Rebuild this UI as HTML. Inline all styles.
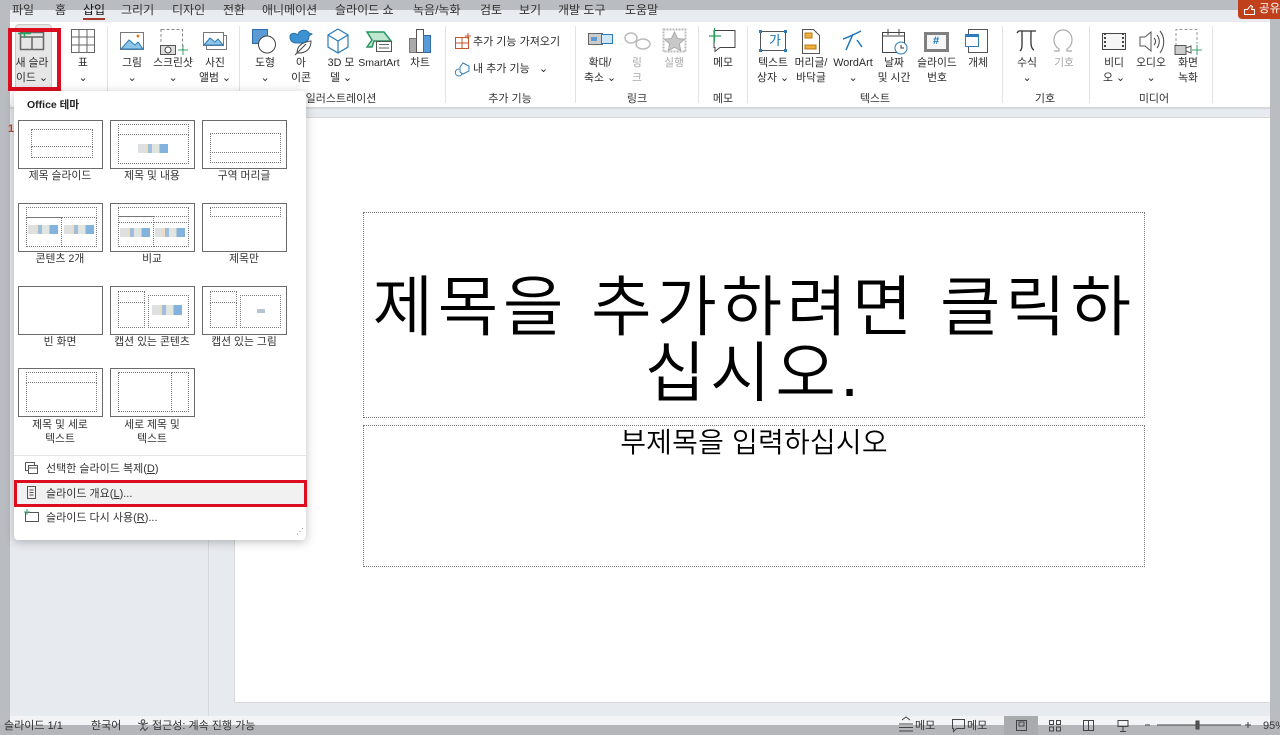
<!DOCTYPE html>
<html lang="ko"><head><meta charset="utf-8"><style>
html,body{margin:0;padding:0}
body{width:1280px;height:735px;position:relative;overflow:hidden;background:#e7eaef;font-family:"Liberation Sans","Noto Sans CJK KR",sans-serif;color:#2b2b2b;font-size:11px}
div,span,svg{position:absolute}
.b{white-space:nowrap;line-height:14px}
.c{text-align:center;white-space:nowrap;line-height:14.5px;font-size:10.8px}
.tab{top:2px;font-size:12px;line-height:16px;white-space:nowrap;color:#333}
.sep{top:26px;height:77px;width:1px;background:#e2e2e2}
.g{top:92px;font-size:11px;line-height:14px;text-align:center;white-space:nowrap;color:#333}
.th{width:83px;height:47px;border:1px solid #6a6a6a;background:#fff;box-sizing:content-box}
.d{border:1px dotted #777;box-sizing:border-box}
.l{font-size:10.8px;line-height:14px;text-align:center;white-space:nowrap;width:92px;color:#333}
.mi{font-size:11px;left:46px;white-space:nowrap;line-height:14px;color:#333}
.dis{color:#a8a8a8}
.ic{width:30px;height:9px;background:linear-gradient(90deg,#d4d6d9 0 25%,#e7d2a8 25% 33%,#7fa8d4 33% 47%,#d5dcd6 47% 72%,#5a9ad0 72%);opacity:.75}
.s{font-size:11px;top:718px;line-height:14px;white-space:nowrap;color:#333}
</style></head><body>
<!-- window chrome -->
<div style="left:0;top:0;width:1280px;height:10px;background:#b9bcc0"></div>
<div style="left:0;top:0;width:10px;height:735px;background:#b9bcc0"></div>
<div style="left:1270px;top:0;width:10px;height:735px;background:#b9bcc0"></div>
<div style="left:0;top:725px;width:1280px;height:10px;background:#b4b6b9"></div>
<div style="left:10px;top:10px;width:1260px;height:12px;background:#e8ebef"></div>
<div style="left:10px;top:22px;width:1260px;height:85px;background:#fff;border-radius:0 0 0 4px"></div>
<div style="left:10px;top:107px;width:1260px;height:2px;background:#d5d8dc"></div>
<div style="left:234px;top:117px;width:1036px;height:586px;background:#fff;border-left:1px solid #d8d8d8;border-top:1px solid #d8d8d8;border-bottom:1px solid #d8d8d8;box-sizing:border-box"></div>
<div style="left:208px;top:109px;width:1px;height:607px;background:#d5d8dc"></div>
<div style="left:10px;top:716px;width:1260px;height:9px;background:#f3f4f6"></div>
<div style="left:1238px;top:0;width:42px;height:19px;background:#c0401c;border-radius:0 0 0 4px"></div>
<svg style="left:1243px;top:3px" width="14" height="13" fill="none" stroke="#fff"><path d="M1.500 6.500h3l3-4 2 1-1 3h3v5h-10z"/></svg>
<span class="b" style="left:1259px;top:2px;color:#fff;font-size:11.500px">공유</span>

<!-- tabs -->
<span class="tab" style="left:12px">파일</span><span class="tab" style="left:55px">홈</span>
<span class="tab" style="left:83px;color:#111">삽입</span>
<div style="left:83px;top:18px;width:22px;height:2px;background:#a8392a"></div>
<span class="tab" style="left:121px">그리기</span><span class="tab" style="left:172px">디자인</span>
<span class="tab" style="left:223px">전환</span><span class="tab" style="left:262px">애니메이션</span>
<span class="tab" style="left:335px">슬라이드 쇼</span><span class="tab" style="left:413px">녹음/녹화</span>
<span class="tab" style="left:480px">검토</span><span class="tab" style="left:519px">보기</span>
<span class="tab" style="left:558px">개발 도구</span><span class="tab" style="left:625px">도움말</span>

<!-- new-slide button + red box -->
<div style="left:15px;top:24px;width:35px;height:66px;background:#e6e6e6;border:1px solid #c8c8c8;border-radius:4px"></div>
<svg style="left:0;top:0" width="1280" height="110" fill="none" stroke-width="1">
<g stroke="#666"><path d="M20.500 32.500h23v17h-23zM20.500 37h23M32 37v12.500" stroke-width="1.500"/></g><path d="M18 33.500h13M24.500 29v9" stroke="#2f9e5f" stroke-width="1.500"/>
<path d="M71.500 29.500h23v23h-23zM71.500 37h23M71.500 45h23M79 29.500v23M87 29.500v23" stroke="#666"/>
<path d="M120.500 32.500h23v17h-23z" stroke="#777" fill="#fff"/><path d="M121 49l8-9 6 5 3-3 5 7z" fill="#8dc4e8" stroke="#2b7cb8"/><circle cx="138" cy="36" r="1.500" fill="#d9822b"/>
<path d="M161.500 29.500h21v21" stroke="#888" stroke-dasharray="3 2"/><path d="M161 29v14" stroke="#888" stroke-dasharray="3 2"/><path d="M160.500 45.500h15v9h-15z" stroke="#555" fill="#ddd"/><circle cx="168" cy="50" r="3" stroke="#444" fill="#fff"/><path d="M178 50h10M183 45v10" stroke="#3aa36b"/>
<path d="M203.500 32.500h20v13h-20z" stroke="#777" fill="#fff"/><path d="M204 45l6-7 5 4 3-3 5 6z" fill="#8dc4e8" stroke="#2b7cb8"/><path d="M223.500 35.500h3v14h-20v-4" stroke="#777"/>
<rect x="252.500" y="29.500" width="15" height="14" fill="#5b9bd5" stroke="#2d6ea8"/><circle cx="267" cy="44.500" r="8.500" fill="#fff" stroke="#444"/>
<path d="M290 37c0-5 6-4 8-2 1-6 9-6 11-2l3 1-3 2c0 5-3 6-5 7h-8c-4 0-6-3-6-6z" fill="#3d93d1" stroke="#2a73ac"/><path d="M297 53c0-8 6-11 14-12 0 8-5 12-12 12z" fill="#fff" stroke="#444"/><path d="M295 55l11-11" stroke="#444"/>
<path d="M338 29l10 6v12l-10 6-10-6V35zM328 35l10 6 10-6M338 41v12" stroke="#2b7cb8" stroke-width="1.200"/>
<path d="M367 32h17l7 9H374l-2 6h-5l5-7z" fill="#bfe6cf" stroke="#2a9460" stroke-width="1.500"/><rect x="376.500" y="41.500" width="15" height="10" fill="#fff" stroke="#555"/><path d="M379 44.500h10M379 48h10" stroke="#666"/>
<rect x="409.500" y="38.500" width="7" height="14" fill="#aaa" stroke="#777"/><rect x="416.500" y="29.500" width="7" height="23" fill="#fff" stroke="#555"/><rect x="423.500" y="35.500" width="7" height="17" fill="#5b9bd5" stroke="#2d6ea8"/>
<path d="M455.500 37.500h13v11h-13zM455.500 43h13M462 37.500v11" stroke="#c4532a"/><path d="M465 36h6M468 33v6" stroke="#c4532a"/>
<path d="M463 63l6 3v5l-6 3-3-2v-5zM459 69a3.500 3.500 0 1 0 3 5" stroke="#2b7cb8"/>
<path d="M588.500 33.500h14v11h-14z" fill="#ccc" stroke="#666"/><path d="M602 37l2-2v8l-2-1" stroke="#666"/><rect x="601.500" y="34.500" width="11" height="9" fill="#cfe6f5" stroke="#2b7cb8"/><rect x="591" y="37" width="6" height="4" fill="#5b9bd5"/>
<g stroke="#bcbcbc" stroke-width="1.500"><ellipse cx="631" cy="38" rx="6" ry="5"/><ellipse cx="643" cy="44" rx="7" ry="5"/></g>
<rect x="663.500" y="29.500" width="22" height="22" stroke="#bbb" stroke-dasharray="2 1" stroke-width="2"/><path d="M674.500 32l3 6.500 7 .7-5.200 4.600 1.500 7-6.300-3.600-6.300 3.600 1.500-7-5.200-4.600 7-.7z" fill="#c8c8c8" stroke="#aaa"/>
<path d="M714 30.500h21v17h-15l-5 4v-4h-1z" stroke="#444"/><path d="M709 36h12M714.500 28v14" stroke="#2d9d5b" stroke-width="1.300"/>
<rect x="760.500" y="31.500" width="25" height="19" stroke="#555"/><g fill="#2b7cb8"><rect x="759" y="30" width="3" height="3"/><rect x="784" y="30" width="3" height="3"/><rect x="759" y="49" width="3" height="3"/><rect x="784" y="49" width="3" height="3"/></g>
<path d="M802.500 29.500h11l6 6v18h-17z" stroke="#555" fill="#fff"/><rect x="805" y="33" width="7" height="5" fill="#f0b040" stroke="#b97a10"/><rect x="805" y="45" width="11" height="4" fill="#f0b040" stroke="#b97a10"/>
<path d="M843 39c6-2 10-4 18-8M853 34l-7 16M857 40l5 7" stroke="#1a74b8" stroke-width="1.500"/>
<rect x="882.500" y="32.500" width="22" height="20" stroke="#444" fill="#fff"/><path d="M882 36h23M888 29v6M899 29v6" stroke="#444"/><circle cx="901" cy="48" r="6" fill="#fff" stroke="#2b7cb8"/><path d="M901 45v3h3" stroke="#333"/>
<rect x="925.500" y="33.500" width="22" height="17" fill="#f4f6f8" stroke="#808080" stroke-width="3"/>
<rect x="968.500" y="29.500" width="19" height="23" stroke="#555" fill="#fff"/><rect x="965.500" y="34.500" width="13" height="12" fill="#fff" stroke="#2b7cb8"/><path d="M965 36h13" stroke="#2b7cb8" stroke-width="2"/>
<path d="M1017 33c2-3 3-2 5-2h14M1022 31v15c0 3-1 4-2 5M1031 31c0 10-1 17 3 19" stroke="#333" stroke-width="1.300"/>
<path d="M1054 51h5v-2c-3-2-5-5-5-9 0-6 4-10 9-10s9 4 9 10c0 4-2 7-5 9v2h5" stroke="#aaa" stroke-width="1.200"/>
<rect x="1102.500" y="33.500" width="23" height="16" fill="#f5f5f5" stroke="#444"/><path d="M1105 33v17M1123 33v17" stroke="#444" stroke-dasharray="2 2" stroke-width="2"/>
<path d="M1140 37h5l6-5v19l-6-5h-5z" stroke="#555"/><path d="M1154 38c2 2 2 5 0 7M1157 35c3 4 3 9 0 13M1160 31c5 6 5 15 0 22" stroke="#444"/>
<path d="M1176 46V29.500h21V44" stroke="#999" stroke-dasharray="3 2"/><rect x="1175" y="45.500" width="11" height="9" fill="#ccc" stroke="#555"/><path d="M1186 48l5-2v7l-5-2" stroke="#555"/><path d="M1192 50h10M1197 45v10" stroke="#3aa36b"/>
</svg>
<span class="b" style="left:769px;top:34px;font-size:13px;color:#1a74b8">가</span>
<span class="b" style="left:933px;top:34px;font-size:11px;font-weight:bold;color:#1a74b8">#</span>
<div style="left:8px;top:28px;width:45px;height:55px;border:4px solid #dc0d1f;box-sizing:content-box"></div>

<!-- ribbon labels -->
<div class="c" style="left:11px;top:56px;width:42px">새 슬라<br>이드 ⌄</div>
<div class="c" style="left:64px;top:56px;width:38px">표<br>⌄</div>
<div class="c" style="left:112px;top:56px;width:40px">그림<br>⌄</div>
<div class="c" style="left:150px;top:56px;width:46px">스크린샷<br>⌄</div>
<div class="c" style="left:195px;top:56px;width:40px">사진<br>앨범 ⌄</div>
<div class="c" style="left:245px;top:56px;width:40px">도형<br>⌄</div>
<div class="c" style="left:282px;top:56px;width:38px">아<br>이콘</div>
<div class="c" style="left:320px;top:56px;width:42px">3D 모<br>델 ⌄</div>
<div class="c" style="left:357px;top:56px;width:44px;font-size:10.500px">SmartArt</div>
<div class="c" style="left:401px;top:56px;width:38px">차트</div>
<span class="b" style="left:473px;top:35px;font-size:11px">추가 기능 가져오기</span>
<span class="b" style="left:473px;top:62px;font-size:11px">내 추가 기능 &nbsp; ⌄</span>
<div class="c" style="left:580px;top:56px;width:40px">확대/<br>축소 ⌄</div>
<div class="c dis" style="left:617px;top:56px;width:40px">링<br>크</div>
<div class="c dis" style="left:655px;top:56px;width:38px">실행</div>
<div class="c" style="left:704px;top:56px;width:38px">메모</div>
<div class="c" style="left:752px;top:56px;width:42px">텍스트<br>상자 ⌄</div>
<div class="c" style="left:788px;top:56px;width:46px">머리글/<br>바닥글</div>
<div class="c" style="left:830px;top:56px;width:46px;">WordArt<br>⌄</div>
<div class="c" style="left:873px;top:56px;width:42px">날짜<br>및 시간</div>
<div class="c" style="left:913px;top:56px;width:48px">슬라이드<br>번호</div>
<div class="c" style="left:958px;top:56px;width:40px">개체</div>
<div class="c" style="left:1008px;top:56px;width:38px">수식<br>⌄</div>
<div class="c dis" style="left:1045px;top:56px;width:38px">기호</div>
<div class="c" style="left:1094px;top:56px;width:40px">비디<br>오 ⌄</div>
<div class="c" style="left:1130px;top:56px;width:42px">오디오<br>⌄</div>
<div class="c" style="left:1168px;top:56px;width:40px">화면<br>녹화</div>
<div class="g" style="left:305px;width:72px">일러스트레이션</div>
<div class="g" style="left:485px;width:50px">추가 기능</div>
<div class="g" style="left:620px;width:34px">링크</div>
<div class="g" style="left:706px;width:34px">메모</div>
<div class="g" style="left:858px;width:34px">텍스트</div>
<div class="g" style="left:1028px;width:34px">기호</div>
<div class="g" style="left:1136px;width:36px">미디어</div>
<div class="sep" style="left:107px"></div><div class="sep" style="left:239px"></div><div class="sep" style="left:445px"></div><div class="sep" style="left:575px"></div><div class="sep" style="left:698px"></div><div class="sep" style="left:747px"></div><div class="sep" style="left:1002px"></div><div class="sep" style="left:1089px"></div><div class="sep" style="left:1212px"></div>

<span class="b" style="left:8px;top:122px;color:#b7472a;font-size:11px;font-weight:bold">1</span>

<!-- slide -->
<div style="left:363px;top:212px;width:782px;height:206px;border:1px dotted #777;box-sizing:border-box"></div>
<div style="left:363px;top:425px;width:782px;height:142px;border:1px dotted #777;box-sizing:border-box"></div>
<div style="left:363px;top:274px;width:782px;text-align:center;font-size:66px;letter-spacing:4.500px;line-height:66px;color:#000;white-space:nowrap;font-weight:350">제목을 추가하려면 클릭하<br>십시오.</div>
<div style="left:363px;top:426px;width:782px;text-align:center;font-size:28px;letter-spacing:.2px;line-height:34px;color:#000;white-space:nowrap;font-weight:350">부제목을 입력하십시오</div>

<!-- dropdown -->
<div style="left:14px;top:91px;width:292px;height:449px;background:#fff;border-radius:4px;box-shadow:0 2px 10px rgba(0,0,0,.25)"></div>
<span class="b" style="left:27px;top:98px;font-weight:bold;font-size:10.500px;color:#222">Office 테마</span>

<div class="th" style="left:18px;top:120px"><div class="d" style="left:12px;top:8px;width:62px;height:18px"></div><div class="d" style="left:12px;top:25px;width:62px;height:12px"></div></div>
<div class="th" style="left:110px;top:120px"><div class="d" style="left:7px;top:3px;width:71px;height:11px"></div><div class="d" style="left:7px;top:13px;width:71px;height:30px"></div><div class="ic" style="left:27px;top:23px"></div></div>
<div class="th" style="left:202px;top:120px"><div class="d" style="left:7px;top:12px;width:71px;height:20px"></div><div class="d" style="left:7px;top:31px;width:71px;height:11px"></div></div>
<div class="th" style="left:18px;top:203px"><div class="d" style="left:7px;top:3px;width:71px;height:11px"></div><div class="d" style="left:7px;top:13px;width:36px;height:30px"></div><div class="d" style="left:42px;top:13px;width:36px;height:30px"></div><div class="ic" style="left:9px;top:21px"></div><div class="ic" style="left:45px;top:21px"></div></div>
<div class="th" style="left:110px;top:203px"><div class="d" style="left:7px;top:3px;width:71px;height:10px"></div><div class="d" style="left:7px;top:12px;width:36px;height:7px"></div><div class="d" style="left:42px;top:12px;width:36px;height:7px"></div><div class="d" style="left:7px;top:18px;width:36px;height:25px"></div><div class="d" style="left:42px;top:18px;width:36px;height:25px"></div><div class="ic" style="left:9px;top:24px"></div><div class="ic" style="left:44px;top:24px"></div></div>
<div class="th" style="left:202px;top:203px"><div class="d" style="left:7px;top:3px;width:71px;height:10px"></div></div>
<div class="th" style="left:18px;top:286px"></div>
<div class="th" style="left:110px;top:286px"><div class="d" style="left:7px;top:4px;width:27px;height:12px"></div><div class="d" style="left:7px;top:15px;width:27px;height:26px"></div><div class="d" style="left:37px;top:8px;width:41px;height:33px"></div><div class="ic" style="left:41px;top:18px;height:10px"></div></div>
<div class="th" style="left:202px;top:286px"><div class="d" style="left:7px;top:4px;width:27px;height:12px"></div><div class="d" style="left:7px;top:15px;width:27px;height:26px"></div><div class="d" style="left:37px;top:8px;width:41px;height:33px"></div><div style="left:54px;top:22px;width:8px;height:4px;background:#b8c4d4"></div></div>
<div class="th" style="left:18px;top:368px"><div class="d" style="left:7px;top:3px;width:71px;height:11px"></div><div class="d" style="left:7px;top:13px;width:71px;height:30px"></div></div>
<div class="th" style="left:110px;top:368px"><div class="d" style="left:7px;top:3px;width:54px;height:40px"></div><div class="d" style="left:60px;top:3px;width:18px;height:40px"></div></div>

<div class="l" style="left:14px;top:169px">제목 슬라이드</div><div class="l" style="left:106px;top:169px">제목 및 내용</div><div class="l" style="left:198px;top:169px">구역 머리글</div>
<div class="l" style="left:14px;top:252px">콘텐츠 2개</div><div class="l" style="left:106px;top:252px">비교</div><div class="l" style="left:198px;top:252px">제목만</div>
<div class="l" style="left:14px;top:335px">빈 화면</div><div class="l" style="left:106px;top:335px">캡션 있는 콘텐츠</div><div class="l" style="left:198px;top:335px">캡션 있는 그림</div>
<div class="l" style="left:14px;top:418px">제목 및 세로<br>텍스트</div><div class="l" style="left:106px;top:418px">세로 제목 및<br>텍스트</div>

<div style="left:14px;top:455px;width:292px;height:1px;background:#e4e4e4"></div>
<div style="left:14px;top:480px;width:293px;height:27px;background:#f1f1f1;border:3px solid #dc0d1f;box-sizing:border-box"></div>
<svg style="left:0;top:455px" width="60" height="80" fill="none" stroke="#555"><path d="M25.500 7.500h9v3M25.500 7.500v8h3M28.500 10.500h9v8h-9zM28.500 13h9"/><path d="M27.500 31.500h8v12h-8zM29.500 35h4M29.500 37.500h4M29.500 40h4"/><path d="M25.500 57.500h13v9h-13z"/><path d="M24 57h6M27 54v6" stroke="#3aa36b"/></svg>
<span class="mi" style="top:462px">선택한 슬라이드 복제(<u>D</u>)</span>
<span class="mi" style="top:487px">슬라이드 개요(<u>L</u>)...</span>
<span class="mi" style="top:511px">슬라이드 다시 사용(<u>R</u>)...</span>
<span class="b" style="left:296px;top:528px;font-size:8px;color:#888;line-height:8px">⋰</span>

<!-- status -->
<span class="s" style="left:4px;top:719px">슬라이드 1/1</span><span class="s" style="left:91px;top:719px">한국어</span>
<span class="s" style="left:152px;top:719px">접근성: 계속 진행 가능</span>
<span class="s" style="left:915px;top:719px">메모</span><span class="s" style="left:967px;top:719px">메모</span>
<div style="left:1004px;top:716px;width:34px;height:19px;background:#a9acaf"></div>
<svg style="left:0;top:715px" width="1280" height="20" fill="none" stroke="#444"><circle cx="143" cy="6.500" r="1.800"/><path d="M138 8l5 1.500 5-1.500M143 9.500v3l-3 3M143 12.500l2 3 3-3"/><path d="M899 9h14M899 12.500h14M899 16h14M902 5l4-3 4 3"/><path d="M952.500 4.500h12v9h-8l-3 3v-3h-1z"/><rect x="1016.500" y="5.500" width="10" height="10"/><rect x="1019" y="7" width="5" height="4"/><path d="M1049.500 5.500h4v4h-4zM1056.500 5.500h4v4h-4zM1049.500 12h4v4h-4zM1056.500 12h4v4h-4z"/><path d="M1083.500 5.500h10v10h-10zM1088.500 5.500v10"/><path d="M1118 5.500h10v6h-10zM1123 11.500v5M1120 16.500h6"/><path d="M1145 10h5M1157 10h84M1245 10h6M1248 7v6"/><rect x="1196" y="6" width="3" height="8" fill="#555"/></svg>
<span class="s" style="left:1263px;top:719px">95%</span>
</body></html>
